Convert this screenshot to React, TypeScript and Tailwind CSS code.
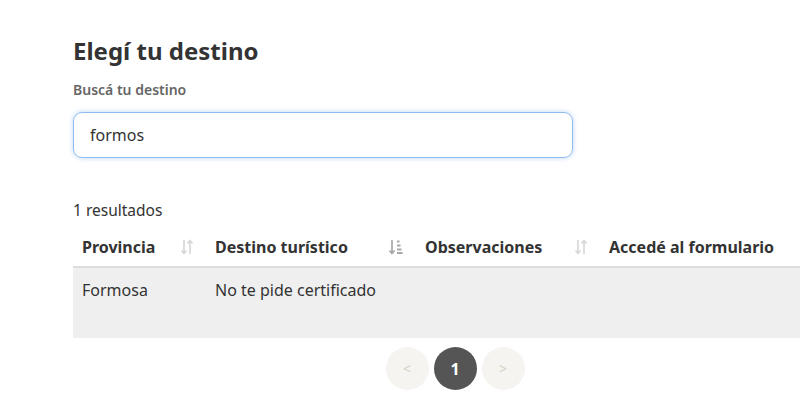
import { useState } from 'react';

function SortIcon() {
  return (
    <svg width="12" height="16" viewBox="0 0 12 16" className="shrink-0">
      <path d="M3 1v13M0.5 11.5L3 14.5l2.5-3" stroke="#d9d9d9" strokeWidth="1.7" fill="none" />
      <path d="M9 15V2M6.5 4.5L9 1.5l2.5 3" stroke="#d9d9d9" strokeWidth="1.7" fill="none" />
    </svg>
  );
}

function SortDownIcon() {
  return (
    <svg width="14" height="16" viewBox="0 0 14 16" className="shrink-0">
      <path d="M3 1v13M0.5 11.5L3 14.5l2.5-3" stroke="#a8a8a8" strokeWidth="1.7" fill="none" />
      <rect x="8" y="1.5" width="2.5" height="2" fill="#a8a8a8" />
      <rect x="8" y="5.5" width="3.5" height="2" fill="#a8a8a8" />
      <rect x="8" y="9.5" width="4.5" height="2" fill="#a8a8a8" />
      <rect x="8" y="13" width="5.5" height="2" fill="#a8a8a8" />
    </svg>
  );
}

const columns = [
  { label: 'Provincia', icon: <SortIcon /> },
  { label: 'Destino turístico', icon: <SortDownIcon /> },
  { label: 'Observaciones', icon: <SortIcon /> },
  { label: 'Accedé al formulario', icon: null },
];

export default function App() {
  const [query, setQuery] = useState('formos');

  return (
    <div
      className="w-[800px] h-[418px] overflow-hidden bg-white text-[#333]"
      style={{ fontFamily: '"Noto Sans", "Open Sans", sans-serif' }}
    >
      <div className="pl-[73px] pt-[36px]">
        <h2 className="text-[24px] font-bold leading-[30px] text-[#333]">Elegí tu destino</h2>
        <label className="block mt-[15px] text-[14px] font-semibold leading-[18px] text-[#666]">
          Buscá tu destino
        </label>
        <input
          value={query}
          onChange={(e) => setQuery(e.target.value)}
          className="block mt-[13px] w-[500px] h-[46px] rounded-[9px] border border-[#8fbcee] px-[16px] text-[16px] text-[#333] outline-none shadow-[0_0_4px_1px_rgba(120,170,230,0.35)]"
        />

        <p className="mt-[42px] text-[15.5px] leading-[20px] text-[#333]">1 resultados</p>

        <div className="mt-[12px] w-[764px]">
          <div className="grid grid-cols-[133px_210px_184px_1fr] h-[36px] pb-[4px] items-center border-b-[2px] border-[#dddddd]">
            {columns.map((c) => (
              <div key={c.label} className="flex items-center justify-between pl-[9px] pr-[13px]">
                <span className="text-[16px] font-bold text-[#333] whitespace-nowrap">{c.label}</span>
                {c.icon}
              </div>
            ))}
          </div>
          <div className="grid grid-cols-[133px_210px_184px_1fr] h-[70px] bg-[#efefef] pt-[10px] text-[16px] text-[#333]">
            <div className="pl-[9px]">Formosa</div>
            <div className="pl-[9px] whitespace-nowrap">No te pide certificado</div>
            <div />
            <div />
          </div>

          <div className="flex justify-center gap-[5px] mt-[9px]">
            <button className="w-[43px] h-[43px] rounded-full bg-[#f6f4f0] text-[#d8d0c4] text-[14px]">&lt;</button>
            <button className="w-[43px] h-[43px] rounded-full bg-[#555555] text-white text-[16px] font-bold">1</button>
            <button className="w-[43px] h-[43px] rounded-full bg-[#f6f4f0] text-[#d8d0c4] text-[14px]">&gt;</button>
          </div>
        </div>
      </div>
    </div>
  );
}
